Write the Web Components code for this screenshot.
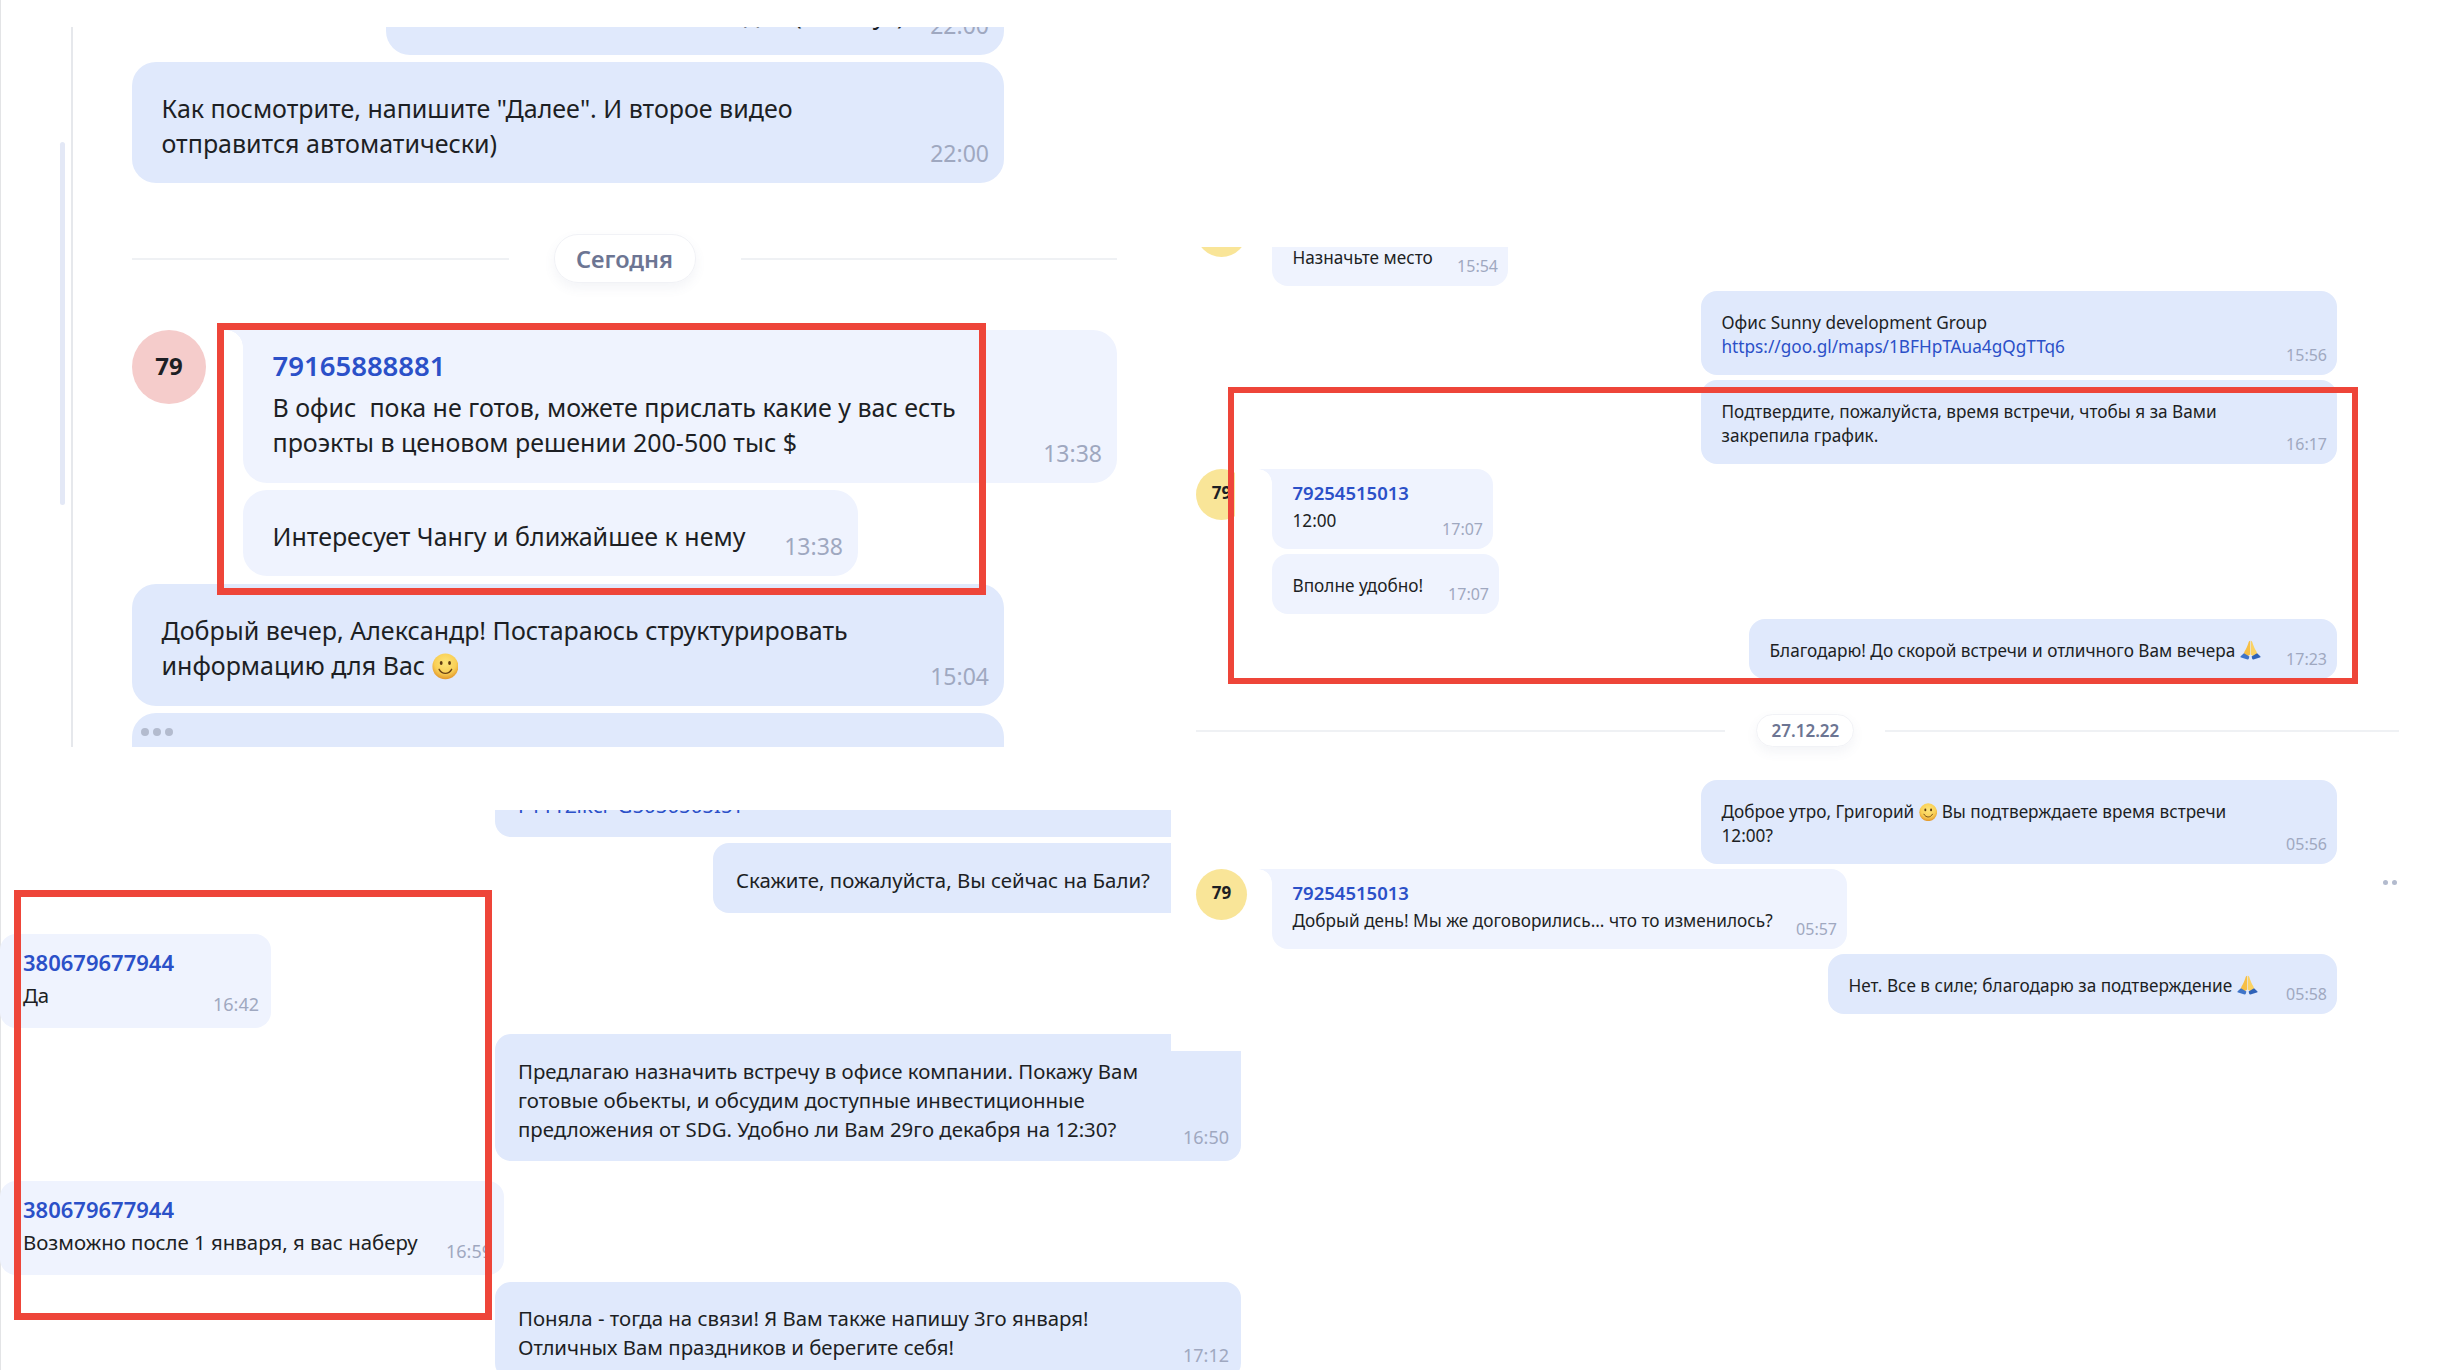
<!DOCTYPE html>
<html lang="ru">
<head>
<meta charset="utf-8">
<title>Chat collage</title>
<style>
  html, body { margin: 0; background: #fff; }
  body { font-family: "Noto Sans", "Open Sans", sans-serif; }
</style>
</head>
<body>
<chat-collage>
  <scroll-thumb style="left:60px;top:142px;width:5px;height:363px"></scroll-thumb>

  <!-- top left window -->
  <chat-panel scale="lg" style="left:71px;top:27px;width:1109px;height:720px;border-left:2px solid #e6e8ec;padding-left:59px;padding-right:63px">
    <chat-bubble style="margin-top:-94px;margin-left:254px;width:618px" time="22:00">Сначала первое видео<br>Итак, все важное в этом видео (5 минут),</chat-bubble>
    <chat-bubble style="width:872px" time="22:00">Как посмотрите, напишите "Далее". И второе видео<br>отправится автоматически)</chat-bubble>
    <chat-divider style="margin-top:44px;margin-bottom:40px">Сегодня</chat-divider>
    <chat-group avatar="79" color="#f5cccb">
      <chat-bubble side="in" wing name="79165888881" time="13:38" style="width:874px">В офис&nbsp; пока не готов, можете прислать какие у вас есть<br>проэкты в ценовом решении 200-500 тыс $</chat-bubble>
      <chat-bubble side="in" time="13:38" style="width:615px">Интересует Чангу и ближайшее к нему</chat-bubble>
    </chat-group>
    <chat-bubble style="width:872px;margin-top:1px" time="15:04">Добрый вечер, Александр! Постараюсь структурировать<br>информацию для Вас <chat-emoji kind="smile"></chat-emoji></chat-bubble>
    <chat-bubble style="width:872px;height:80px;padding:15px 0 0 9px"><chat-dots count="3"></chat-dots></chat-bubble>
  </chat-panel>

  <!-- top right window -->
  <chat-panel scale="sm" style="left:1180px;top:247px;width:1260px;height:800px;padding-left:16px;padding-right:41px">
    <chat-group avatar="79" color="#f9e598" style="margin-top:-41px">
      <chat-bubble side="in" wing name="79254515013" time="15:54" style="width:236px">Назначьте место</chat-bubble>
    </chat-group>
    <chat-bubble style="align-self:flex-end;margin-right:62px;width:636px" time="15:56">Офис Sunny development Group<br><chat-link>https://goo.gl/maps/1BFHpTAua4gQgTTq6</chat-link></chat-bubble>
    <chat-bubble style="align-self:flex-end;margin-right:62px;width:636px" time="16:17">Подтвердите, пожалуйста, время встречи, чтобы я за Вами<br>закрепила график.</chat-bubble>
    <chat-group avatar="79" color="#f9e598" avatar-cut="12">
      <chat-bubble side="in" wing name="79254515013" time="17:07" style="width:221px">12:00</chat-bubble>
      <chat-bubble side="in" time="17:07" style="width:227px">Вполне удобно!</chat-bubble>
    </chat-group>
    <chat-bubble style="align-self:flex-end;margin-right:62px;width:588px" time="17:23">Благодарю! До скорой встречи и отличного Вам вечера <chat-emoji kind="pray"></chat-emoji></chat-bubble>
    <chat-divider lead="1.031" style="margin-top:30px;margin-bottom:28px">27.12.22</chat-divider>
    <chat-bubble style="align-self:flex-end;margin-right:62px;width:636px" time="05:56">Доброе утро, Григорий <chat-emoji kind="smile"></chat-emoji> Вы подтверждаете время встречи<br>12:00?</chat-bubble>
    <chat-group avatar="79" color="#f9e598">
      <chat-bubble side="in" wing name="79254515013" time="05:57" style="width:575px">Добрый день! Мы же договорились... что то изменилось?</chat-bubble>
    </chat-group>
    <chat-bubble style="align-self:flex-end;margin-right:62px;width:509px" time="05:58">Нет. Все в силе; благодарю за подтверждение <chat-emoji kind="pray"></chat-emoji></chat-bubble>
    <chat-dots count="2" style="position:absolute;left:1203px;top:633px"></chat-dots>
  </chat-panel>

  <!-- bottom left sliver -->
  <chat-panel scale="md" style="left:0;top:934px;width:520px;height:360px">
    <chat-bubble side="in" name="380679677944" time="16:42" style="width:271px;--pb:18.5px;--time-drop:-4.5px">Да</chat-bubble>
    <chat-bubble side="in" name="380679677944" time="16:59" style="width:504px;margin-top:147px;--pb:18.5px;--time-drop:-4.5px">Возможно после 1 января, я вас наберу</chat-bubble>
  </chat-panel>

  <!-- bottom right window, its right edge has a step -->
  <chat-panel scale="md" style="left:495px;top:810px;width:746px;height:560px;clip-path:polygon(0 0,676px 0,676px 241px,746px 241px,746px 560px,0 560px)">
    <chat-bubble style="margin-top:-41.500px;width:746px"><chat-link>PYYYZikcr-G5050505I5T</chat-link></chat-bubble>
    <chat-bubble style="align-self:flex-end;width:528px;--pb:18.500px">Скажите, пожалуйста, Вы сейчас на Бали?</chat-bubble>
    <chat-bubble style="width:746px;margin-top:115px" time="16:50">Предлагаю назначить встречу в офисе компании. Покажу Вам<br>готовые обьекты, и обсудим доступные инвестиционные<br>предложения от SDG. Удобно ли Вам 29го декабря на 12:30?</chat-bubble>
    <chat-bubble style="width:746px;margin-top:115px" time="17:12">Поняла - тогда на связи! Я Вам также напишу 3го января!<br>Отличных Вам праздников и берегите себя!</chat-bubble>
  </chat-panel>

  <red-frame style="left:217px;top:323px;width:769px;height:272px;border-width:7px"></red-frame>
  <red-frame style="left:1228px;top:387px;width:1130px;height:297px;border-width:6px"></red-frame>
  <red-frame style="left:14px;top:890px;width:478px;height:430px;border-width:7px"></red-frame>
</chat-collage>

<script>
// the picture is a pasted collage: windows sit on a free canvas, the chat inside them is flow
class ChatCollage extends HTMLElement {
  constructor() {
    super();
    this.attachShadow({ mode: 'open' });
    this.shadowRoot.innerHTML = `
      <style>
      :host {
        display: block;
        position: relative;
        width: 2440px;
        height: 1370px;
        overflow: hidden;
        background: #fff;
        color: #1d1f24;
      }
      .edge {
        position: absolute;
        left: 0;
        top: 0;
        bottom: 0;
        width: 1px;
        background: #e3e4e6;
      }
      </style>
      <div class="edge"></div>
      <slot></slot>
    `;
  }
}

class ChatPanel extends HTMLElement {
  constructor() {
    super();
    this.attachShadow({ mode: 'open' });
    this.shadowRoot.innerHTML = `
      <style>
      :host {
        position: absolute;
        display: flex;
        flex-direction: column;
        align-items: flex-start;
        box-sizing: border-box;
        overflow: hidden;
        gap: var(--gap);
      }
      :host([scale='lg']) {
        --gap: 7px; --fs: 25px; --lh: 35px; --r: 24px;
        --pt: 29px; --pb: 22.5px; --pl: 29.5px; --pr: 15px; --pt-name: 18px; --name-gap: 6px;
        --name-fs: 27.5px; --name-lh: 36px; --time-fs: 23px; --time-lh: 26px; --time-drop: -5.5px;
        --av: 74px; --av-gap: 37px; --wing: 17px; --av-fs: 24px; --av-lift: 3px;
        --pill-h: 49px; --pill-w: 142px; --pill-gap: 45px; --pill-fs: 23.5px; --pill-r: 24px;
      }
      :host([scale='md']) {
        --gap: 6px; --fs: 20.4px; --lh: 29px; --r: 16px;
        --pt: 22.5px; --pb: 17px; --pl: 23px; --pr: 12px; --pt-name: 15px; --name-gap: 5.5px;
        --name-fs: 22px; --name-lh: 26px; --time-fs: 18px; --time-lh: 20px; --time-drop: -3px;
      }
      :host([scale='sm']) {
        --gap: 5px; --fs: 17.2px; --lh: 24px; --r: 16px;
        --pt: 19.5px; --pb: 16.5px; --pl: 20.5px; --pr: 10px; --pt-name: 11.5px; --name-gap: 4px;
        --name-fs: 18.5px; --name-lh: 24px; --time-fs: 16px; --time-lh: 18px; --time-drop: -5.5px;
        --av: 51px; --av-gap: 25px; --wing: 14px; --av-fs: 17px; --av-lift: 4px;
        --pill-h: 33px; --pill-w: 98px; --pill-gap: 31px; --pill-fs: 17px; --pill-r: 17px;
      }
      </style>
      <slot></slot>
    `;
  }
}

class ChatBubble extends HTMLElement {
  constructor() {
    super();
    this.attachShadow({ mode: 'open' });
    this.shadowRoot.innerHTML = `
      <style>
      :host {
        display: block;
        position: relative;
        flex: none;
        box-sizing: border-box;
        background: #e0e9fc;
        border-radius: var(--r);
        padding: var(--pt) var(--pr) var(--pb) var(--pl);
      }
      :host([side='in']) { background: #eff3fe; }
      :host([name]) { padding-top: var(--pt-name); }
      :host([wing]) { border-top-left-radius: 0; }
      :host([wing])::before {
        content: '';
        position: absolute;
        top: 0;
        left: calc(var(--wing) * -1);
        width: var(--wing);
        height: var(--wing);
        background: radial-gradient(circle at 0 100%, transparent calc(var(--wing) - 0.5px), #eff3fe var(--wing));
      }
      .name {
        font-size: var(--name-fs);
        line-height: var(--name-lh);
        font-weight: 600;
        color: #2b50c8;
        margin-bottom: var(--name-gap);
      }
      .row {
        display: flex;
        align-items: flex-end;
      }
      .text {
        flex: 1;
        min-width: 0;
        font-size: var(--fs);
        line-height: var(--lh);
        white-space: nowrap;
      }
      .time {
        flex: none;
        font-size: var(--time-fs);
        line-height: var(--time-lh);
        margin-bottom: var(--time-drop);
        color: #9fa8c0;
      }
      </style>
      <div class="name"></div>
      <div class="row">
        <div class="text"><slot></slot></div>
        <div class="time"></div>
      </div>
    `;
  }

  connectedCallback() {
    const name = this.shadowRoot.querySelector('.name');
    const time = this.shadowRoot.querySelector('.time');
    if (this.hasAttribute('name')) {
      name.innerText = this.getAttribute('name');
    } else {
      name.remove();
    }
    time.innerText = this.getAttribute('time') || '';
  }
}

class ChatGroup extends HTMLElement {
  constructor() {
    super();
    this.attachShadow({ mode: 'open' });
    this.shadowRoot.innerHTML = `
      <style>
      :host {
        display: flex;
        flex: none;
        align-items: flex-start;
        gap: var(--av-gap);
      }
      .avatar {
        flex: none;
        box-sizing: border-box;
        width: var(--av);
        height: var(--av);
        padding-bottom: var(--av-lift);
        border-radius: 50%;
        display: flex;
        align-items: center;
        justify-content: center;
        font-size: var(--av-fs);
        font-weight: 700;
        color: #1d1f24;
      }
      .stack {
        display: flex;
        flex-direction: column;
        align-items: flex-start;
        gap: var(--gap);
      }
      </style>
      <div class="avatar"></div>
      <div class="stack"><slot></slot></div>
    `;
  }

  connectedCallback() {
    const avatar = this.shadowRoot.querySelector('.avatar');
    avatar.innerText = this.getAttribute('avatar');
    avatar.style.background = this.getAttribute('color');
    // the frame on the screenshot has a white inside that eats the avatar
    if (this.hasAttribute('avatar-cut')) {
      avatar.style.clipPath = `inset(0 ${this.getAttribute('avatar-cut')}px 0 0)`;
    }
  }
}

class ChatDivider extends HTMLElement {
  constructor() {
    super();
    this.attachShadow({ mode: 'open' });
    this.shadowRoot.innerHTML = `
      <style>
      :host {
        display: flex;
        flex: none;
        align-self: stretch;
        align-items: center;
        gap: var(--pill-gap);
      }
      .line {
        flex: 1 1 0;
        height: 2px;
        background: #eff1f4;
      }
      .pill {
        flex: none;
        box-sizing: border-box;
        width: var(--pill-w);
        height: var(--pill-h);
        border: 1px solid #f1f2f6;
        border-radius: var(--pill-r);
        box-shadow: 0 5px 12px rgba(90, 100, 140, 0.07);
        display: flex;
        align-items: center;
        justify-content: center;
        font-size: var(--pill-fs);
        font-weight: 600;
        color: #6c7593;
      }
      </style>
      <div class="line"></div>
      <div class="pill"><slot></slot></div>
      <div class="line"></div>
    `;
  }

  connectedCallback() {
    if (this.hasAttribute('lead')) {
      this.shadowRoot.querySelector('.line').style.flexGrow = this.getAttribute('lead');
    }
  }
}

class ChatLink extends HTMLElement {
  constructor() {
    super();
    this.attachShadow({ mode: 'open' });
    this.shadowRoot.innerHTML = `
      <style>
      :host { display: inline; color: #2b50c8; }
      </style>
      <slot></slot>
    `;
  }
}

class ChatDots extends HTMLElement {
  constructor() {
    super();
    this.attachShadow({ mode: 'open' });
  }

  connectedCallback() {
    const count = Number(this.getAttribute('count')) || 3;
    const size = count === 3 ? 8 : 5;
    let dots = '';
    for (let i = 0; i < count; i++) dots += '<i></i>';
    this.shadowRoot.innerHTML = `
      <style>
      :host { display: flex; gap: 4px; }
      i {
        width: ${size}px;
        height: ${size}px;
        border-radius: 50%;
        background: #b3bbce;
      }
      </style>
      ${dots}
    `;
  }
}

class ChatEmoji extends HTMLElement {
  constructor() {
    super();
    this.attachShadow({ mode: 'open' });
  }

  connectedCallback() {
    const smile = `
      <svg viewBox="0 0 32 32">
        <defs>
          <radialGradient id="f" cx="50%" cy="36%" r="64%">
            <stop offset="0" stop-color="#fde57a"/>
            <stop offset="0.65" stop-color="#f9cf55"/>
            <stop offset="1" stop-color="#e2962a"/>
          </radialGradient>
        </defs>
        <circle cx="16" cy="16" r="15.5" fill="url(#f)"/>
        <ellipse cx="11" cy="12" rx="1.7" ry="2.3" fill="#5e3b12"/>
        <ellipse cx="21" cy="12" rx="1.7" ry="2.3" fill="#5e3b12"/>
        <path d="M8.500 19.500c2 3.600 5 4.800 7.500 4.800s5.500-1.200 7.500-4.800" fill="none" stroke="#6b4214" stroke-width="1.600" stroke-linecap="round"/>
      </svg>`;
    const pray = `
      <svg viewBox="0 0 32 30">
        <path d="M15.500 1c-1.500 0-2.300 1.800-3.100 4.800-1 3.600-3.100 8-5.300 11.200l-1.300 3.400 4.300 5.600 5.400-3.800z" fill="#f7bf45"/>
        <path d="M16.500 1c1.500 0 2.300 1.800 3.100 4.800 1 3.600 3.100 8 5.300 11.200l1.300 3.400-4.300 5.600-5.400-3.800z" fill="#fbd263"/>
        <path d="M6 20 1 24.700c-.7.900-.2 1.800.8 2.100l9.700 2.900c1 .2 1.600-.4 1.900-1.200l.9-3.300z" fill="#3f74c9"/>
        <path d="M26 20 31 24.700c.7.900.2 1.800-.8 2.100l-9.700 2.900c-1 .2-1.600-.4-1.900-1.200l-.9-3.300z" fill="#2f62b8"/>
      </svg>`;
    const isPray = this.getAttribute('kind') === 'pray';
    this.shadowRoot.innerHTML = `
      <style>
      :host {
        display: inline-block;
        width: ${isPray ? '1.22em' : '1.07em'};
        height: ${isPray ? '1.15em' : '1.07em'};
        vertical-align: -0.2em;
      }
      svg { display: block; width: 100%; height: 100%; }
      </style>
      ${isPray ? pray : smile}
    `;
  }
}

class RedFrame extends HTMLElement {
  constructor() {
    super();
    this.attachShadow({ mode: 'open' });
    this.shadowRoot.innerHTML = `
      <style>
      :host {
        position: absolute;
        box-sizing: border-box;
        border: 6px solid #ee4539;
      }
      </style>
    `;
  }
}

class ScrollThumb extends HTMLElement {
  constructor() {
    super();
    this.attachShadow({ mode: 'open' });
    this.shadowRoot.innerHTML = `
      <style>
      :host {
        position: absolute;
        background: #e3e8f6;
        border-radius: 3px;
      }
      </style>
    `;
  }
}

window.customElements.define('chat-collage', ChatCollage);
window.customElements.define('chat-panel', ChatPanel);
window.customElements.define('chat-bubble', ChatBubble);
window.customElements.define('chat-group', ChatGroup);
window.customElements.define('chat-divider', ChatDivider);
window.customElements.define('chat-link', ChatLink);
window.customElements.define('chat-dots', ChatDots);
window.customElements.define('chat-emoji', ChatEmoji);
window.customElements.define('red-frame', RedFrame);
window.customElements.define('scroll-thumb', ScrollThumb);
</script>
</body>
</html>
